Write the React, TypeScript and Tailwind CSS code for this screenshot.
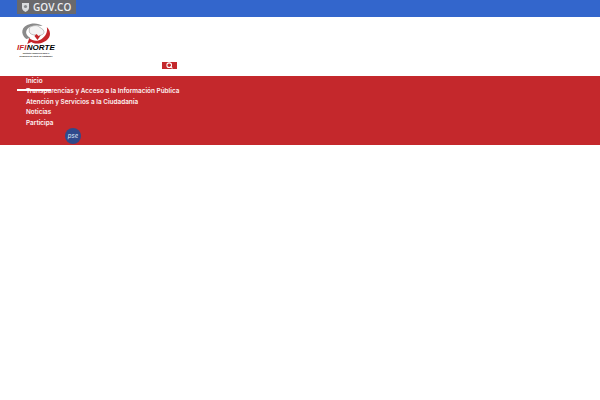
import React from 'react';
import { Search } from 'lucide-react';

const MENU = [
  'Inicio',
  'Transparencias y Acceso a la Información Pública',
  'Atención y Servicios a la Ciudadanía',
  'Noticias',
  'Participa',
];

const Logo = () => (
  <div className="flex flex-col items-center w-[38px]">
    <svg width="33" height="21" viewBox="0 0 32 21" preserveAspectRatio="none">
      <path d="M6 16C0 11 1 3 10 1c5-1 9 0 12 2-5-1-11-1-14 2-3 3-3 7 2 10z" fill="#8a8a8a" />
      <path d="M9 5c3-3 8-3 10-1 1 2 3 1 4 4 1 2-1 4-3 4l-2 3-3-3c-3 0-5-1-6-3z" fill="#f4f4f4" stroke="#9a9a9a" strokeWidth="0.6" />
      <path d="M26 4c5 5 4 12-3 15-4 2-9 2-12 0l-4 2 2-6c3 3 8 4 12 1 4-3 6-7 5-12z" fill="#c4262a" />
      <path d="M14 13l3 4 3-5-2 1-2-2z" fill="#c4262a" />
    </svg>
    <div className="font-['Liberation_Sans',sans-serif] font-bold italic text-[8px] leading-[7px] text-black tracking-[0.1px] whitespace-nowrap">
      <span className="text-[#c4262a]">IFI</span>NORTE
    </div>
    <div className="mt-[1px] text-center font-['Liberation_Sans',sans-serif] font-bold text-[2.1px] leading-[2.6px] text-[#222] whitespace-nowrap">
      Instituto Financiero para el
      <br />
      Desarrollo de Norte de Santander
    </div>
  </div>
);

export default function App() {
  return (
    <div className="min-h-[400px] bg-white font-['Inter',sans-serif]">
      <div className="h-[17px] bg-[#3366cc] pl-[17px]">
        <div className="flex h-[14px] w-[59px] items-center gap-[2px] bg-[#69696c] pl-[4px]">
          <svg width="9" height="10" viewBox="0 0 9 10">
            <path d="M1 1h7v5c0 2-2 3-3.500 4C3 9 1 8 1 6z" fill="#d9dcdf" />
            <circle cx="4.500" cy="4.500" r="1.600" fill="#85888c" />
          </svg>
          <span className="ml-[1px] font-['Open_Sans',sans-serif] font-semibold text-[10px] leading-[14px] text-[#eef0f2] whitespace-nowrap">GOV.CO</span>
        </div>
      </div>

      <div className="h-[59px] pl-[17px] pt-[6px] relative">
        <Logo />
        <div className="absolute left-[162px] top-[45px] flex h-[7px] w-[15px] items-center justify-center bg-[#c4282c]">
          <Search size={7} strokeWidth={3.5} color="#fff" />
        </div>
      </div>

      <nav className="relative h-[69px] bg-[#c4282c] pl-[26px]">
        <ul className="flex flex-col">
          {MENU.map((item) => (
            <li key={item} className="h-[10.4px] text-[6.4px] leading-[10.4px] font-semibold text-[#fdf2f2] whitespace-nowrap">
              {item}
            </li>
          ))}
        </ul>
        <div className="absolute left-[17px] top-[13px] h-[2px] w-[34px] bg-white" />
        <div className="absolute left-[65px] top-[52px] flex h-[16px] w-[16px] items-center justify-center rounded-full bg-[#2f4a8c]">
          <span className="text-[6px] italic text-[#dfe6f5] leading-none">pse</span>
        </div>
      </nav>
    </div>
  );
}
